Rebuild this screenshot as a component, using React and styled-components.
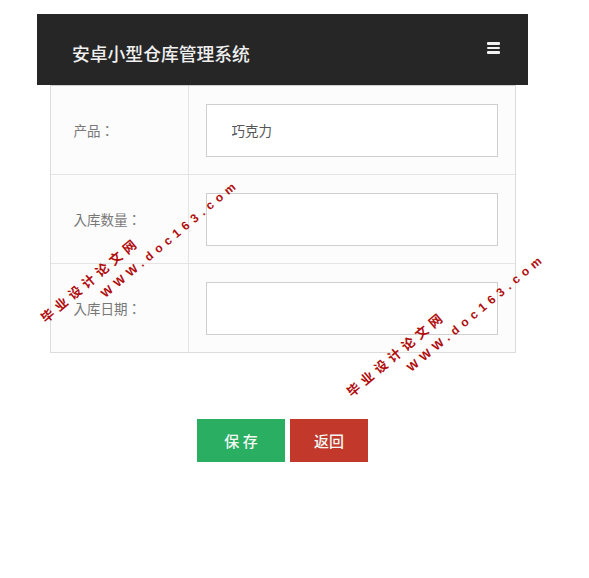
import styled, { createGlobalStyle } from "styled-components";

const GlobalStyle = createGlobalStyle`
  html, body {
    margin: 0;
    padding: 0;
    background: #ffffff;
  }
  body {
    font-family: "Noto Sans CJK SC", "Noto Sans", sans-serif;
  }
`;

const fields = [
  { label: "产品：", value: "巧克力" },
  { label: "入库数量：", value: "" },
  { label: "入库日期：", value: "" },
];

const marks = [
  { left: 36, top: 312 },
  { left: 342, top: 386 },
];

export default function App() {
  return (
    <Page>
      <GlobalStyle />
      <Container>
        <Header>
          <Title>安卓小型仓库管理系统</Title>
          <MenuIcon aria-label="menu">
            <span />
            <span />
            <span />
          </MenuIcon>
        </Header>
        <FormTable>
          {fields.map((field) => (
            <Row key={field.label}>
              <LabelCell>{field.label}</LabelCell>
              <InputCell>
                <TextInput defaultValue={field.value} />
              </InputCell>
            </Row>
          ))}
        </FormTable>
        <Buttons>
          <Button color="#29ae62" width="88px">保 存</Button>
          <Button color="#c2392c" width="78px">返回</Button>
        </Buttons>
      </Container>
      {marks.map((m, i) => (
        <Watermark key={i} left={m.left} top={m.top}>
          <MarkCn>毕业设计论文网</MarkCn>
          <MarkUrl>WWW.doc163.com</MarkUrl>
        </Watermark>
      ))}
    </Page>
  );
}

const Page = styled.div`
  position: relative;
  width: 589px;
  min-height: 578px;
  padding-top: 14px;
  box-sizing: border-box;
  overflow: hidden;
`;

const Container = styled.div`
  width: 491px;
  margin-left: 37px;
  display: flex;
  flex-direction: column;
`;

const Header = styled.div`
  height: 71px;
  background-color: #262626;
  display: flex;
  align-items: center;
  justify-content: space-between;
  padding: 0 28px 0 35px;
  box-sizing: border-box;
`;

const Title = styled.h1`
  margin: 0;
  padding-top: 7px;
  font-size: 17.8px;
  font-weight: 500;
  color: #f0f0f0;
`;

const MenuIcon = styled.div`
  width: 13px;
  display: flex;
  flex-direction: column;
  gap: 2px;
  margin-top: -3px;
  span {
    display: block;
    height: 2.5px;
    background: #f2f2f2;
    border-radius: 1px;
  }
`;

const FormTable = styled.div`
  width: 466px;
  margin: 0 auto;
  border: 1px solid #dcdcdc;
  border-top-color: #cfcfcf;
  box-sizing: border-box;
  background: #fcfcfc;
`;

const Row = styled.div`
  display: grid;
  grid-template-columns: 138px 1fr;
  height: 88px;
  border-bottom: 1px solid #e4e4e4;
  &:last-child {
    border-bottom: none;
  }
`;

const LabelCell = styled.div`
  display: flex;
  align-items: center;
  padding-left: 23px;
  border-right: 1px solid #e4e4e4;
  font-family: "Noto Sans CJK TC", "Noto Sans CJK SC", sans-serif;
  font-size: 13.5px;
  color: #777777;
`;

const InputCell = styled.div`
  display: flex;
  align-items: center;
  padding: 0 17px;
`;

const TextInput = styled.input`
  width: 100%;
  height: 53px;
  box-sizing: border-box;
  border: 1px solid #cfcfcf;
  background: #ffffff;
  padding: 0 0 0 25px;
  font-family: "Noto Sans CJK SC", "Noto Sans", sans-serif;
  font-size: 13.5px;
  color: #555555;
  outline: none;
`;

const Buttons = styled.div`
  display: flex;
  justify-content: center;
  gap: 5px;
  margin-top: 66px;
`;

const Button = styled.button`
  width: ${(props) => props.width};
  height: 43px;
  border: none;
  background-color: ${(props) => props.color};
  color: #f3f8f4;
  font-family: "Noto Sans CJK SC", "Noto Sans", sans-serif;
  font-size: 15px;
  font-weight: 500;
  cursor: pointer;
`;

const Watermark = styled.div`
  position: absolute;
  left: ${(props) => props.left}px;
  top: ${(props) => props.top}px;
  transform: rotate(-40deg);
  transform-origin: 0 0;
  color: #b00d0d;
  font-weight: 700;
  white-space: nowrap;
  pointer-events: none;
`;

const MarkCn = styled.div`
  font-family: "Noto Sans CJK SC", sans-serif;
  font-size: 13px;
  line-height: 20px;
  letter-spacing: 4.8px;
`;

const MarkUrl = styled.div`
  font-family: "Liberation Sans", Arial, sans-serif;
  font-size: 12px;
  line-height: 20px;
  letter-spacing: 5px;
  margin-left: 62px;
`;
